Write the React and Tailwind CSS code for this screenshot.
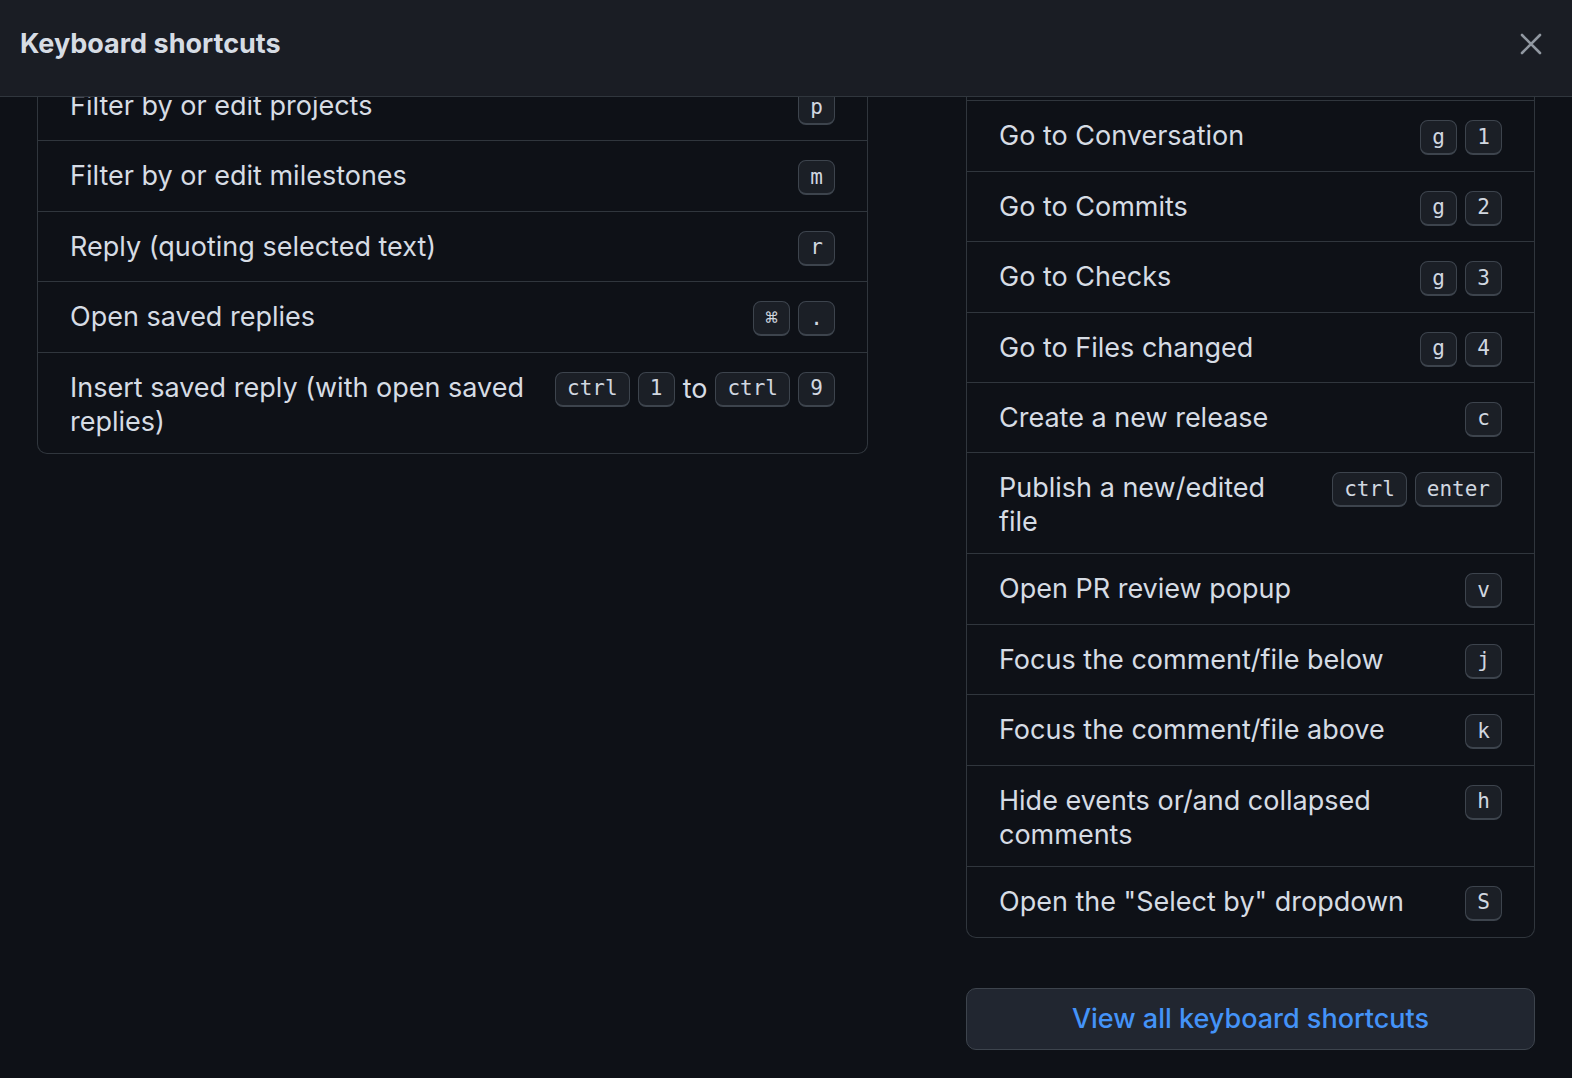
import React from 'react';

const LEFT_ROWS = [
  { label: 'Filter by or edit projects', keys: [['p']] },
  { label: 'Filter by or edit milestones', keys: [['m']] },
  { label: 'Reply (quoting selected text)', keys: [['r']] },
  { label: 'Open saved replies', keys: [['⌘', '.']] },
  { label: 'Insert saved reply (with open saved replies)', keys: [['ctrl', '1'], ['ctrl', '9']] },
];

const RIGHT_ROWS = [
  { label: 'Go to Code', keys: [['g', 'c']] },
  { label: 'Go to Conversation', keys: [['g', '1']] },
  { label: 'Go to Commits', keys: [['g', '2']] },
  { label: 'Go to Checks', keys: [['g', '3']] },
  { label: 'Go to Files changed', keys: [['g', '4']] },
  { label: 'Create a new release', keys: [['c']] },
  { label: 'Publish a new/edited file', keys: [['ctrl', 'enter']] },
  { label: 'Open PR review popup', keys: [['v']] },
  { label: 'Focus the comment/file below', keys: [['j']] },
  { label: 'Focus the comment/file above', keys: [['k']] },
  { label: 'Hide events or/and collapsed comments', keys: [['h']] },
  { label: 'Open the "Select by" dropdown', keys: [['S']] },
];

function Kbd({ children }) {
  return (
    <kbd className="inline-flex h-[35px] min-w-[37px] items-center justify-center rounded-[8px] border border-b-2 border-[#3d444d] bg-[#1b1f26] px-[11px] font-['DejaVu_Sans_Mono',monospace] text-[21px] leading-none text-[#d1d7e0]">
      {children}
    </kbd>
  );
}

function Row({ row, last }) {
  return (
    <div className={`flex min-h-[70.4px] items-start justify-between gap-6 px-8 pt-[18px] pb-[14px] ${last ? '' : 'border-b border-[#30363d]'}`}>
      <span className="flex-1 text-[27px] leading-[34px] text-[#d6dce4]">{row.label}</span>
      <div className="mt-[1px] flex shrink-0 items-center gap-2">
        {row.keys.map((combo, i) => (
          <React.Fragment key={i}>
            {i > 0 && <span className="text-[27px] leading-[34px] text-[#d6dce4]">to</span>}
            {combo.map((k, j) => <Kbd key={j}>{k}</Kbd>)}
          </React.Fragment>
        ))}
      </div>
    </div>
  );
}

export default function App() {
  return (
    <div className="flex h-[1078px] w-[1572px] flex-col overflow-hidden bg-[#0e1117] font-['Inter',sans-serif]">
      {/* Dialog header */}
      <header className="flex h-[97px] shrink-0 items-center justify-between border-b border-[#30363d] bg-[#1a1d24] pb-2 pl-5 pr-[30px]">
        <h1 className="text-[27px] font-bold text-[#d6dce4]">Keyboard shortcuts</h1>
        <svg width="22" height="22" viewBox="0 0 22 22" className="text-[#9198a1]">
          <path d="M2 2L20 20M20 2L2 20" stroke="currentColor" strokeWidth="2.6" strokeLinecap="round" />
        </svg>
      </header>

      {/* Scrolled body */}
      <div className="flex-1 overflow-hidden">
        <div className="flex items-start gap-[98px] pl-[37px]">
          <div className="-mt-[26px] w-[831px] rounded-b-[10px] border border-t-0 border-[#30363d]">
            {LEFT_ROWS.map((r, i) => <Row key={r.label} row={r} last={i === LEFT_ROWS.length - 1} />)}
          </div>

          <div className="-mt-[66px] w-[569px]">
            <div className="rounded-b-[10px] border border-t-0 border-[#30363d]">
              {RIGHT_ROWS.map((r, i) => <Row key={r.label} row={r} last={i === RIGHT_ROWS.length - 1} />)}
            </div>
            <button className="mt-[50px] flex h-[62px] w-full items-center justify-center rounded-[10px] border border-[#3d444d] bg-[#212630] text-[27px] font-medium text-[#4493f8]">
              View all keyboard shortcuts
            </button>
          </div>
        </div>
      </div>
    </div>
  );
}
